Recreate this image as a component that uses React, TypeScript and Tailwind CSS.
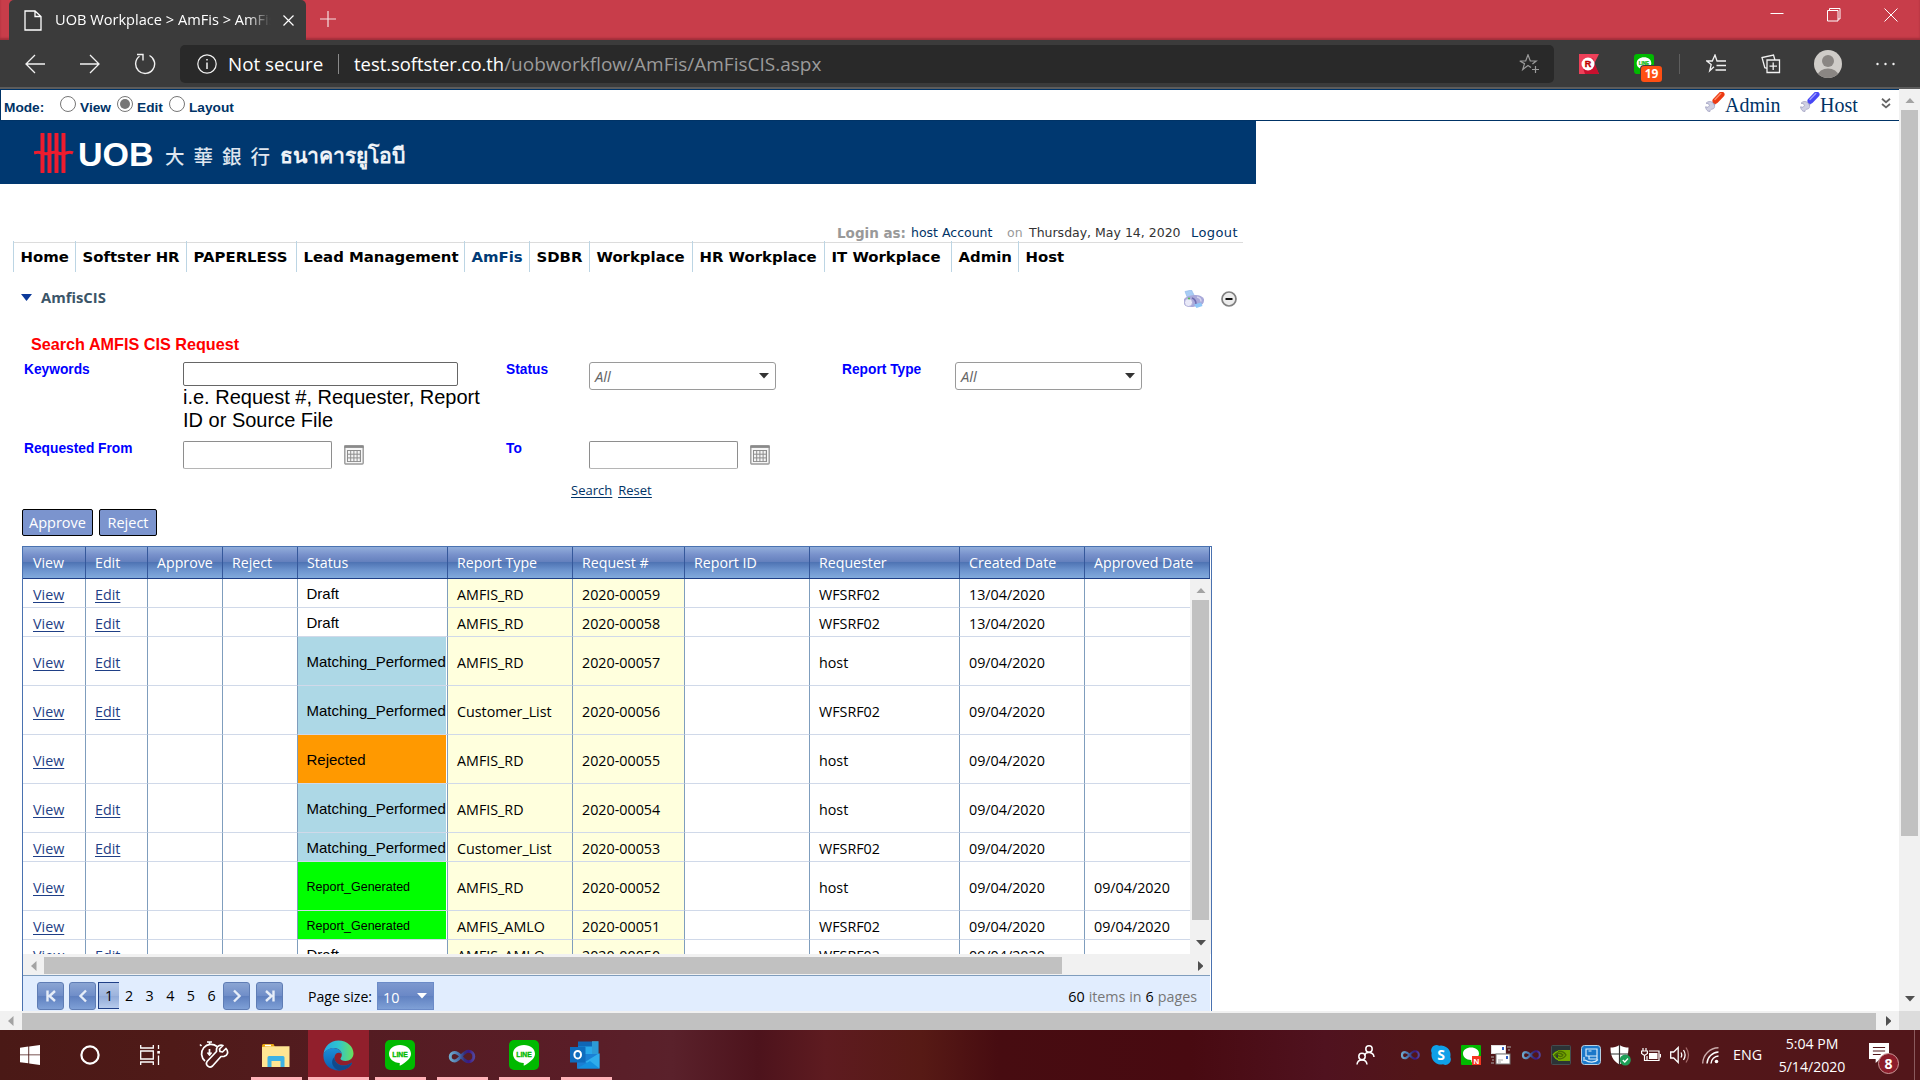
import React from "react";

const sans = "font-['Open_Sans',sans-serif]";
const arial = "font-['Liberation_Sans',sans-serif]";

/* ---------- icons ---------- */

function LineLogo({ size, className = "" }: { size: number; className?: string }) {
  return (
    <svg width={size} height={size} viewBox="0 0 30 30" className={`shrink-0 ${className}`}>
      <rect width="30" height="30" rx="5" fill="#00b900" />
      <path d="M15 5c6.400 0 11 3.900 11 8.800 0 2.200-1 4-2.600 5.700C21 22 17.600 24.400 15.300 25.500c-.8.3-.7-.3-.6-1l.1-1.500C8.500 22.800 4 19 4 13.800 4 8.900 8.600 5 15 5z" fill="#fff" />
      <text x="15" y="16.800" fontSize="6.800" fontWeight="bold" textAnchor="middle" fill="#00b900" stroke="#00b900" strokeWidth=".3" fontFamily="Liberation Sans, sans-serif">LINE</text>
    </svg>
  );
}

function Infinity({ w, h, id, className = "" }: { w: number; h: number; id: string; className?: string }) {
  return (
    <svg width={w} height={h} viewBox="0 0 28 15" className={`shrink-0 ${className}`}>
      <defs>
        <linearGradient id={id} x1="0" x2="1" y1="0" y2="0">
          <stop offset="0" stopColor="#6fa9cc" />
          <stop offset=".4" stopColor="#456ba8" />
          <stop offset=".6" stopColor="#34307c" />
          <stop offset=".8" stopColor="#3b1788" />
          <stop offset="1" stopColor="#51459c" />
        </linearGradient>
      </defs>
      <path d="M14 8C11.500 5 9.500 3.500 7 3.500a4.200 4.200 0 0 0 0 8.500c5 0 8-9.800 14-9.800a5.200 5.200 0 0 1 0 10.500c-3 0-5-2.200-7-4.700z" fill="none" stroke={`url(#${id})`} strokeWidth="3" />
    </svg>
  );
}

function Wrench({ color, light }: { color: string; light: string }) {
  return (
    <svg width="20" height="20" viewBox="0 0 20 20" className="shrink-0">
      <path d="M9.500 10.500 6.500 14" stroke="#a9a9c8" strokeWidth="4" />
      <path d="M7.500 10.300C5.500 9 2.500 9.300 1 11.300l2.500.4.900 2L3 15.300l-2.500-.5c.4 2 1 3.400 2.500 4.400l2 .3c0-1.800 1.200-2.200 2.400-2.400C9.300 16.800 10 14.800 9.500 13z" fill="#cfd0e2" stroke="#9a9abc" strokeWidth=".7" />
      <path d="m10.500 8.800 6-6.300" stroke={color} strokeWidth="6" strokeLinecap="round" />
      <path d="m10 7.500 5.800-6" stroke={light} strokeWidth="1.500" strokeLinecap="round" />
    </svg>
  );
}

function Calendar({ className = "" }: { className?: string }) {
  return (
    <svg width="20" height="20" viewBox="0 0 20 20" className={`shrink-0 ${className}`}>
      <rect x=".8" y="1" width="18.400" height="18" rx="1" fill="#f6f6f6" stroke="#9a9a9a" strokeWidth="1.400" />
      <rect x=".3" y=".3" width="19.400" height="2.600" fill="#8a8a8a" />
      <rect x="3" y="5" width="14" height="12" fill="#8d8d8d" />
      {[0, 1, 2, 3].map((c) => [0, 1, 2].map((r) => <rect key={`${c}${r}`} x={4 + c * 3.200} y={6 + r * 3.700} width="2.200" height="2.700" fill="#f4f4f4" />))}
    </svg>
  );
}

function Tri({ dir, color, className = "" }: { dir: "up" | "down" | "left" | "right"; color: string; className?: string }) {
  const d = { up: "M0 5.500 5 0l5 5.500z", down: "M0 0h10L5 5.500z", left: "M5.500 0v10L0 5z", right: "M0 0v10l5.500-5z" }[dir];
  const v = dir === "up" || dir === "down";
  return (
    <svg width={v ? 10 : 5.500} height={v ? 5.500 : 10} viewBox={v ? "0 0 10 5.500" : "0 0 5.500 10"} className={`shrink-0 ${className}`}>
      <path d={d} fill={color} />
    </svg>
  );
}

/* ---------- browser chrome ---------- */

function TabStrip() {
  return (
    <div className="flex h-10 bg-[#c83d4a] shadow-[inset_0_-2px_2px_rgba(90,20,30,0.35)]">
      <div className="ml-[9px] flex h-10 w-[297px] items-center rounded-t-[5px] bg-[#3b3b3b] pl-[15px]">
        <svg width="18" height="21" viewBox="0 0 18 21" fill="none" stroke="#fff" strokeWidth="1.300">
          <path d="M1 1h10l6 5.500V20H1zM11 1v5.500h6" />
        </svg>
        <div className={`ml-[13px] w-[218px] overflow-hidden whitespace-nowrap text-[14.6px] text-white [mask-image:linear-gradient(90deg,#000_88%,transparent_99%)] ${sans}`}>
          UOB Workplace &gt; AmFis &gt; AmFis
        </div>
        <svg width="11" height="11" viewBox="0 0 11 11" className="ml-[10px]" stroke="#fff" strokeWidth="1.200">
          <path d="m.5.5 10 10M10.500.5l-10 10" />
        </svg>
      </div>
      <svg width="16" height="16" viewBox="0 0 16 16" className="mt-[11px] ml-[14px]" stroke="#f6dfe1" strokeWidth="1.200">
        <path d="M8 0v16M0 8h16" />
      </svg>
      <div className="mt-2 mr-[22px] ml-auto flex gap-[43px]">
        <svg width="14" height="14" viewBox="0 0 14 14" stroke="#fff"><path d="M.5 5.500h13" /></svg>
        <svg width="14" height="14" viewBox="0 0 14 14" stroke="#fff" fill="none"><path d="M.5 2.500h10.500V13H.5zM2.500 2.500v-2H13V11h-2" /></svg>
        <svg width="14" height="14" viewBox="0 0 14 14" stroke="#fff"><path d="m.5.5 13 13M13.500.5l-13 13" /></svg>
      </div>
    </div>
  );
}

function Toolbar() {
  return (
    <div className={`flex h-[49px] items-center border-b-2 border-[#5c5c5c] bg-[#3b3b3b] ${sans}`}>
      <svg width="20" height="20" viewBox="0 0 20 20" className="ml-[25px]" fill="none" stroke="#f2f2f2" strokeWidth="1.300"><path d="M20 10H1M10 1 1 10l9 9" /></svg>
      <svg width="20" height="20" viewBox="0 0 20 20" className="ml-[35px]" fill="none" stroke="#f2f2f2" strokeWidth="1.300"><path d="M0 10h19M10 1l9 9-9 9" /></svg>
      <svg width="22" height="22" viewBox="0 0 22 22" className="ml-[34px]" fill="none" stroke="#f2f2f2" strokeWidth="1.400"><path d="M15.500 2.500A9.500 9.500 0 1 1 5.500 3.300M3 1.500h6v6" /></svg>
      <div className="ml-[24px] flex h-[38px] w-[1374px] items-center rounded-[5px] bg-[#292929]">
        <svg width="20" height="20" viewBox="0 0 20 20" className="ml-[17px]" fill="none" stroke="#f2f2f2" strokeWidth="1.200"><circle cx="10" cy="10" r="9.200" /><path d="M10 8.500V15M10 5v1.600" strokeWidth="1.500" /></svg>
        <span className="ml-[11px] w-[96px] pt-px text-[18.8px] whitespace-nowrap text-white">Not secure</span>
        <span className="ml-[14px] h-5 w-px bg-[#8a8a8a]" />
        <span className="ml-[15px] pt-px text-[18.4px] whitespace-nowrap text-white">test.softster.co.th</span>
        <span className="pt-px text-[19px] whitespace-nowrap text-[#9b9b9b]">/uobworkflow/AmFis/AmFisCIS.aspx</span>
        <svg width="21" height="20" viewBox="0 0 21 20" className="mr-[14px] ml-auto" fill="none" stroke="#9b9b9b" strokeWidth="1.200">
          <path d="m12 13.500-3-1.900-5.300 4 1.800-6L.8 7h5.900L9 .8 11.300 7h5.900l-3.800 3" /><path d="M16.500 12v7M13 15.500h7" />
        </svg>
      </div>
      <svg width="20" height="20" viewBox="0 0 20 20" className="ml-[25px]">
        <path d="M0 0h20l-5 10 5 10H0z" fill="#ee4059" /><path d="m4 14 10-10 2 6 4 10H6z" fill="#c8102e" />
        <circle cx="9" cy="10" r="6.500" fill="#fff" />
        <text x="9" y="13.200" fontSize="9" fontWeight="bold" textAnchor="middle" fill="#bf0000" stroke="#bf0000" strokeWidth=".4" fontFamily="Liberation Sans, sans-serif">R</text>
      </svg>
      <div className="relative ml-[35px] h-5 w-5">
        <LineLogo size={20} />
        <span className="absolute top-[12px] left-[7px] flex h-4 w-[21px] items-center justify-center rounded-[3px] bg-[#ff4f13] text-[12px] font-bold text-white shadow-[0_0_0_1px_#3b3b3b]">19</span>
      </div>
      <span className="ml-[25px] h-5 w-px bg-[#5e5e5e]" />
      <svg width="20" height="20" viewBox="0 0 20 20" className="ml-[26px]" fill="none" stroke="#f2f2f2" strokeWidth="1.300">
        <path d="m8 12.800-4.300 4 1.500-6.300L.8 7h5.500L9 1l2 6h9M10.500 11.500H20M9.500 16H20" />
      </svg>
      <svg width="20" height="20" viewBox="0 0 20 20" className="ml-[35px]" fill="none" stroke="#f2f2f2" strokeWidth="1.300">
        <path d="M6 6h12.500v12.500H6zM12.200 8.500V16M8.500 12.200H16M6 14.500l-2.200-.8L1 3.500 12.500 1l1.300 4.500" />
      </svg>
      <svg width="28" height="28" viewBox="0 0 28 28" className="ml-[33px]">
        <defs><clipPath id="av"><circle cx="14" cy="14" r="14" /></clipPath></defs>
        <g clipPath="url(#av)"><rect width="28" height="28" fill="#cfccc8" /><circle cx="14" cy="11" r="6" fill="#8a8683" /><ellipse cx="14" cy="25" rx="10" ry="6.500" fill="#8a8683" /></g>
      </svg>
      <svg width="19" height="4" viewBox="0 0 19 4" className="ml-[34px]" fill="#f2f2f2"><circle cx="1.500" cy="2" r="1.200" /><circle cx="9.500" cy="2" r="1.200" /><circle cx="17.500" cy="2" r="1.200" /></svg>
    </div>
  );
}

/* ---------- page ---------- */

function Radio({ on = false, className = "" }: { on?: boolean; className?: string }) {
  return (
    <span className={`flex h-4 w-4 shrink-0 items-center justify-center rounded-full border border-[#767676] bg-white ${className}`}>
      {on && <span className="h-[10px] w-[10px] rounded-full bg-[#767676]" />}
    </span>
  );
}

function ModeBar() {
  return (
    <div className={`flex h-8 items-start border-y border-l border-[#003366] text-[13.7px] leading-4 font-bold text-[#003366] ${arial}`}>
      <span className="mt-[10px] ml-[3px] w-[56px]">Mode:</span>
      <Radio className="mt-[6px]" /><span className="mt-[10px] ml-1 w-[37px]">View</span>
      <Radio on className="mt-[6px]" /><span className="mt-[10px] ml-1 w-8">Edit</span>
      <Radio className="mt-[6px]" /><span className="mt-[10px] ml-1">Layout</span>
      <div className="ml-auto flex font-['Liberation_Serif',serif] text-[20px] leading-[22px] font-normal">
        <span className="mt-[2px] flex"><Wrench color="#ec3a12" light="#ff8a66" /></span><span className="mt-[4px] w-[75px]">Admin</span>
        <span className="mt-[2px] flex"><Wrench color="#4747f5" light="#9a9aff" /></span><span className="mt-[4px] w-[61px]">Host</span>
        <svg width="10" height="11" viewBox="0 0 10 11" className="mt-[8px] mr-[8px]" fill="none" stroke="#666" strokeWidth="1.800"><path d="m1 .8 4 3.400L9 .8M1 6l4 3.400L9 6" /></svg>
      </div>
    </div>
  );
}

function Banner() {
  return (
    <div className="flex h-[63px] w-[1256px] items-start bg-[#003870] whitespace-nowrap text-white">
      <svg width="40" height="40" viewBox="0 0 40 40" className="mt-[12px] ml-[34px] shrink-0" stroke="#ee1c2e" fill="none">
        <path d="M8.500 1v38M15.500 1v38M22.500 1v38M29.500 1v38" strokeWidth="4" strokeLinecap="round" />
        <path d="M0 20q4-1.500 8 0t8 0 8 0 8 0 7 0" strokeWidth="3.200" />
      </svg>
      <span className={`mt-[15px] ml-[4px] w-[87px] text-[34px] leading-[36px] font-bold ${arial}`}>UOB</span>
      <span className="mt-[20px] w-[115px] font-['Noto_Sans_CJK_TC',sans-serif] text-[19.500px] leading-[30px] font-medium tracking-[9px] text-[#dfe6ef]">大華銀行</span>
      <span className={`mt-[20px] text-[21.2px] leading-[30px] font-bold text-[#eef2f7] ${arial}`}>ธนาคารยูโอบี</span>
    </div>
  );
}

const nav: [string, string][] = [
  ["Home", "w-[62px]"], ["Softster HR", "w-[111px]"], ["PAPERLESS", "w-[110px]"], ["Lead Management", "w-[168px]"],
  ["AmFis", "w-[65px]"], ["SDBR", "w-[60px]"], ["Workplace", "w-[103px]"], ["HR Workplace", "w-[132px]"],
  ["IT Workplace", "w-[127px]"], ["Admin", "w-[67px]"], ["Host", "w-[60px]"],
];

function Header() {
  return (
    <>
      <div className="flex h-[57px] w-[1239px] items-end justify-end font-['DejaVu_Sans',sans-serif] text-[12.5px] leading-4 whitespace-nowrap">
        <span className="w-[74px] text-[13.500px] font-bold text-[#999]">Login as:</span>
        <span className="w-[96px] text-[#003366]">host Account</span>
        <span className="w-[22px] text-[#999]">on</span>
        <span className="w-[162px] text-[#333]">Thursday, May 14, 2020</span>
        <span className="w-[48px] text-[13px] tracking-[0.400px] text-[#003366]">Logout</span>
      </div>
      <nav className="ml-[13px] flex h-[31px] w-[1230px] bg-[linear-gradient(#dcdcdc,#dcdcdc)] bg-[length:100%_1px] bg-[position:0_1px] bg-no-repeat font-['DejaVu_Sans',sans-serif] text-[14.9px] font-bold text-black">
        {nav.map(([t, w]) => (
          <a key={t} className={`${w} shrink-0 border-l border-[#bcd5e4] pt-[6px] pl-[6.500px] leading-[20px] whitespace-nowrap ${t === "AmFis" ? "text-[#003a75]" : ""}`}>{t}</a>
        ))}
      </nav>
    </>
  );
}

function ModuleTitle() {
  return (
    <div className={`flex h-[62px] w-[1237px] pl-[21px] text-[14.800px] font-bold text-[#3b5568] ${sans}`}>
      <svg width="11" height="7" viewBox="0 0 11 7" className="mt-[22px]"><path d="M0 0h11L5.500 7z" fill="#0c3a9a" /></svg>
      <span className="mt-[14px] ml-[9px] leading-[22px]">AmfisCIS</span>
      <svg width="20" height="18" viewBox="0 0 20 18" className="mt-[18px] ml-auto">
        <path d="M1 1.500 7.500 0l3 6-7 2z" fill="#a9cdf5" stroke="#8bb4e8" strokeWidth=".6" />
        <path d="M0 9c2-2.500 6-3.500 10-4 5-.5 8 1 10 4 .3 3-1 5-3 6L9 17c-4 .5-8-1-9-3z" fill="#a9a9da" />
        <ellipse cx="4.500" cy="12.500" rx="4" ry="4" fill="#e9e9f8" stroke="#9a9acb" strokeWidth=".6" />
        <path d="M8 8c3 1 4 3 4 6" stroke="#6d6db0" strokeWidth="1.500" fill="none" />
        <path d="M13 7c2.500.5 4 2 4 4.500" stroke="#d5d5ee" strokeWidth="1.500" fill="none" />
        <path d="m10 14.500 7-2 1.500 3.500-6 2z" fill="#8fc6f7" /><circle cx="5" cy="8.500" r="1" fill="#4dbb4d" />
      </svg>
      <svg width="16" height="16" viewBox="0 0 16 16" className="mt-[19px] ml-[17px]"><circle cx="8" cy="8" r="7" fill="#ececec" stroke="#808080" strokeWidth="1.700" /><path d="M4.500 8h7" stroke="#111" strokeWidth="2" /></svg>
    </div>
  );
}

function Select() {
  return (
    <div className={`flex h-[28px] w-[187px] items-center rounded-[3px] border border-[#9a9a9a] bg-white pr-[6px] pl-[5px] text-[14.8px] text-[#666] italic ${sans}`}>
      <span>All</span>
      <Tri dir="down" color="#333" className="ml-auto" />
    </div>
  );
}

function SearchForm() {
  const label = `text-[13.75px] leading-4 font-bold text-[#0000ff] ${arial}`;
  const date = "h-[28px] w-[149px] rounded-[2px] border border-[#8e8e8e] border-b-[#b5b5b5] bg-white";
  return (
    <>
      <h2 className={`ml-[31px] h-[20px] text-[16.2px] leading-[20px] font-bold text-[#ff0000] ${arial}`}>Search AMFIS CIS Request</h2>
      <div className="mt-[8px] ml-[24px] grid grid-cols-[159px_323px_83px_253px_113px_187px] grid-rows-[79px_28px] items-start">
        <span className={label}>Keywords</span>
        <div>
          <div className="h-[24px] w-[275px] rounded-[2px] border border-[#666] bg-white" />
          <p className={`w-[310px] text-[20px] leading-[23px] text-black ${arial}`}>i.e. Request #, Requester, Report ID or Source File</p>
        </div>
        <span className={label}>Status</span>
        <Select />
        <span className={label}>Report Type</span>
        <Select />
        <span className={label}>Requested From</span>
        <div className="flex"><div className={date} /><Calendar className="mt-[4px] ml-[12px]" /></div>
        <span className={label}>To</span>
        <div className="flex"><div className={date} /><Calendar className="mt-[4px] ml-[12px]" /></div>
      </div>
      <div className={`mt-[12px] ml-[571px] flex h-[19px] gap-[6px] text-[13px] leading-[18px] text-[#003366] underline underline-offset-2 ${sans}`}>
        <a>Search</a><a>Reset</a>
      </div>
    </>
  );
}

const cols = "grid grid-cols-[63px_62px_75px_75px_150px_125px_112px_125px_150px_125px_125px]";
const heads = ["View", "Edit", "Approve", "Reject", "Status", "Report Type", "Request #", "Report ID", "Requester", "Created Date", "Approved Date"];

type Row = { tall: boolean; edit: boolean; status: string; type: string; no: string; by: string; created: string; approved: string };
const rows: Row[] = [
  { tall: false, edit: true, status: "Draft", type: "AMFIS_RD", no: "2020-00059", by: "WFSRF02", created: "13/04/2020", approved: "" },
  { tall: false, edit: true, status: "Draft", type: "AMFIS_RD", no: "2020-00058", by: "WFSRF02", created: "13/04/2020", approved: "" },
  { tall: true, edit: true, status: "Matching_Performed", type: "AMFIS_RD", no: "2020-00057", by: "host", created: "09/04/2020", approved: "" },
  { tall: true, edit: true, status: "Matching_Performed", type: "Customer_List", no: "2020-00056", by: "WFSRF02", created: "09/04/2020", approved: "" },
  { tall: true, edit: false, status: "Rejected", type: "AMFIS_RD", no: "2020-00055", by: "host", created: "09/04/2020", approved: "" },
  { tall: true, edit: true, status: "Matching_Performed", type: "AMFIS_RD", no: "2020-00054", by: "host", created: "09/04/2020", approved: "" },
  { tall: false, edit: true, status: "Matching_Performed", type: "Customer_List", no: "2020-00053", by: "WFSRF02", created: "09/04/2020", approved: "" },
  { tall: true, edit: false, status: "Report_Generated", type: "AMFIS_RD", no: "2020-00052", by: "host", created: "09/04/2020", approved: "09/04/2020" },
  { tall: false, edit: false, status: "Report_Generated", type: "AMFIS_AMLO", no: "2020-00051", by: "WFSRF02", created: "09/04/2020", approved: "09/04/2020" },
  { tall: false, edit: true, status: "Draft", type: "AMFIS_AMLO", no: "2020-00050", by: "WFSRF02", created: "09/04/2020", approved: "" },
];

const statusStyle: Record<string, string> = {
  Draft: "text-[15px]",
  Matching_Performed: "bg-[#add8e6] text-[15px]",
  Rejected: "bg-[#ff9900] text-[15px]",
  Report_Generated: "bg-[#00ff00] text-[12.500px]",
};

function GridRow({ r }: { r: Row }) {
  const cell = "flex items-center border-r border-b border-r-[#7f9dbd] border-b-[#d0d9e9] pl-[9px] pt-[3px] whitespace-nowrap";
  const link = "text-[#1f3f86] underline underline-offset-2";
  return (
    <div className={`${cols} shrink-0 ${r.tall ? "h-[49px]" : "h-[29px]"}`}>
      <div className={`${cell} pl-[10px]`}><a className={link}>View</a></div>
      <div className={cell}>{r.edit && <a className={link}>Edit</a>}</div>
      <div className={cell} />
      <div className={cell} />
      <div className="flex border-r border-b border-r-[#7f9dbd] border-b-[#d0d9e9]">
        <div className={`mr-px flex w-full items-center pt-[2px] pl-[8.500px] whitespace-nowrap ${arial} ${statusStyle[r.status]}`}>{r.status}</div>
      </div>
      <div className={`${cell} bg-[#ffffdd]`}>{r.type}</div>
      <div className={`${cell} bg-[#ffffdd]`}>{r.no}</div>
      <div className={cell} />
      <div className={cell}>{r.by}</div>
      <div className={cell}>{r.created}</div>
      <div className={cell}>{r.approved}</div>
    </div>
  );
}

function PagerButton({ d, className = "" }: { d: string; className?: string }) {
  return (
    <span className={`flex h-7 w-[27px] shrink-0 items-center justify-center rounded-[3px] border border-[#5f7db5] bg-[linear-gradient(#8ba5d3,#6f8dc8_50%,#5f80bf_51%,#7fa0d6)] ${className}`}>
      <svg width="14" height="14" viewBox="0 0 14 14" fill="none" stroke="#e6edf8" strokeWidth="2.400"><path d={d} /></svg>
    </span>
  );
}

function Grid() {
  return (
    <div className={`mt-[10px] ml-[22px] flex h-[465px] w-[1190px] flex-col border-x border-t border-[#4a72b0] text-[14.3px] text-black ${sans}`}>
      <div className={`${cols} h-8 w-[1187px] shrink-0 border-b border-[#1f3f86] bg-[linear-gradient(#92aedb_0%,#7891cb_25%,#6480bd_48%,#4f74b4_50%,#6d94ce_75%,#82aadc_100%)] text-[14.2px] text-white`}>
        {heads.map((h, i) => (
          <div key={h} className={`flex items-center border-r border-[#35589b] pt-px whitespace-nowrap ${i === 0 ? "pl-[10px]" : "pl-[9px]"}`}>{h}</div>
        ))}
      </div>
      <div className="flex h-[375px] w-[1188px] shrink-0">
        <div className="flex w-[1167px] flex-col overflow-hidden">
          {rows.map((r) => <GridRow key={r.no} r={r} />)}
        </div>
        <div className="flex w-[21px] flex-col items-center bg-[#f1f1f1]">
          <Tri dir="up" color="#a3a3a3" className="mt-[8.500px]" />
          <div className="mt-[7px] h-[320px] w-[17px] shrink-0 bg-[#c1c1c1]" />
          <Tri dir="down" color="#505050" className="mt-[20px]" />
        </div>
      </div>
      <div className="flex h-[21px] w-[1187px] shrink-0 items-center bg-[#f1f1f1] pt-[2px]">
        <Tri dir="left" color="#a3a3a3" className="ml-[8px]" />
        <div className="ml-[7.500px] h-[17px] w-[1018px] bg-[#c1c1c1]" />
        <Tri dir="right" color="#505050" className="mr-[7px] ml-auto" />
      </div>
      <div className="flex h-[36px] w-[1187px] shrink-0 items-start border-t border-[#7f9dbd] bg-[#e1edfe] pt-[6px]">
        <PagerButton className="ml-[14px]" d="M3.500 1.500v11M11 2 5.500 7l5.500 5" />
        <PagerButton className="ml-[5px]" d="M10 1.500 4.500 7l5.500 5.500" />
        <span className="ml-[2px] flex h-[27px] w-[21px] items-center justify-center border border-r-0 border-[#1f3f86] bg-[linear-gradient(#b6c9e8,#9db4dd_50%,#8fa9d7_51%,#b7cbec)]">1</span>
        <span className="ml-[6px] flex h-[27px] w-[98px] items-center">
          {["2", "3", "4", "5", "6"].map((n) => <a key={n} className="w-[20.600px] shrink-0">{n}</a>)}
        </span>
        <PagerButton d="M4 1.500 9.500 7 4 12.500" />
        <PagerButton className="ml-[6px]" d="M10.500 1.500v11M3 2l5.500 5L3 12" />
        <span className="ml-[25px] flex h-7 w-[69px] items-center pt-px text-[14.100px]">Page size:</span>
        <span className="flex h-7 w-[57px] items-center border border-[#6b8bc8] bg-[linear-gradient(#7d98cf,#6a88c6_50%,#6081c1_51%,#7fa0d6)] pr-[6px] pl-[5px] text-white">
          <span className="pt-[3px]">10</span><Tri dir="down" color="#fff" className="ml-auto" />
        </span>
        <span className="mr-[13px] ml-auto flex h-7 items-center gap-[4px] pt-px text-[#777]"><b className="font-normal text-black">60</b>items in<b className="font-normal text-black">6</b>pages</span>
      </div>
    </div>
  );
}

function Page() {
  const btn = "flex h-[27px] items-center justify-center rounded-[2px] border border-black bg-[#7b94ce]";
  return (
    <div className="flex h-[941px] bg-white">
      <div className="flex w-[1899px] flex-col">
        <div className="h-[922px] overflow-hidden">
          <ModeBar />
          <Banner />
          <Header />
          <ModuleTitle />
          <SearchForm />
          <div className={`mt-[9px] ml-[22px] flex gap-[6px] text-[14.5px] text-white ${sans}`}>
            <span className={`${btn} w-[71px]`}>Approve</span>
            <span className={`${btn} w-[58px]`}>Reject</span>
          </div>
          <Grid />
        </div>
        <div className="flex h-[19px] items-center bg-[#f1f1f1]">
          <Tri dir="left" color="#a3a3a3" className="ml-[8px]" />
          <div className="mt-[2px] ml-[8px] h-[17px] w-[1854px] bg-[#c1c1c1]" />
          <Tri dir="right" color="#505050" className="ml-[10px]" />
        </div>
      </div>
      <div className="flex w-[21px] flex-col items-center bg-[#f1f1f1]">
        <Tri dir="up" color="#a3a3a3" className="mt-[8.500px]" />
        <div className="mt-[7px] h-[726px] w-[17px] shrink-0 bg-[#c1c1c1]" />
        <Tri dir="down" color="#505050" className="mt-[160px]" />
        <div className="mt-auto h-[19px] w-[21px] bg-[#dcdcdc]" />
      </div>
    </div>
  );
}

/* ---------- taskbar ---------- */

function TaskItem({ children, active = false, className = "" }: { children: React.ReactNode; active?: boolean; className?: string }) {
  return (
    <div className={`flex h-[50px] shrink-0 flex-col ${active ? "bg-[#911f2c]" : ""} ${className}`}>
      <div className="flex h-[47px] items-center justify-center pt-[3px]">{children}</div>
      <div className="h-[3px] bg-[#ffb3b9]" />
    </div>
  );
}

function Taskbar() {
  return (
    <div className={`flex h-[50px] items-center bg-[linear-gradient(90deg,#4a1916_0%,#4f1a18_9%,#541c22_19%,#5a1d27_30%,#5a212b_35%,#4d131c_39.500%,#5e1b20_43%,#571a15_48%,#470c11_52%,#480a11_62%,#50121f_69%,#521618_74%,#52161a_100%)] text-white ${sans}`}>
      <svg width="20" height="20" viewBox="0 0 20 20" className="ml-[20px]" fill="#fff"><path d="M0 2.800 8.300 1.600v7.800H0zM9.200 1.500 20 0v9.400H9.200zM0 10.300h8.300v8L0 17.200zM9.200 10.300H20V20L9.200 18.400z" /></svg>
      <svg width="20" height="20" viewBox="0 0 20 20" className="ml-[40px]" fill="none" stroke="#fff" strokeWidth="2.200"><circle cx="10" cy="10" r="8.600" /></svg>
      <svg width="21" height="20" viewBox="0 0 21 20" className="ml-[40px]" fill="none" stroke="#fff" strokeWidth="1.300"><path d="M.7 0v3h12.600V0M.7 20v-3h12.600v3M.7 6h12.600v8H.7zM18.500 0v4M18.500 10.500V20" /><path d="M17.300 6h2.600v2.600h-2.600z" fill="#fff" stroke="none" /></svg>
      <svg width="30" height="28" viewBox="0 0 30 28" className="ml-[38px]" fill="none" stroke="#fff" strokeWidth="1.700" strokeLinejoin="round">
        <path d="M18 5.500A9.300 9.300 0 1 0 6 20M8 1h5M10.500 1v2.500M10.500 8v5.500M2.500 5 1 3.500" /><path d="m8.500 11.500 2 2.500 2-2.500" />
        <path d="M27 7.500 23.500 11l-2.500-.5-.5-2.500L24 4.500c-3-1-6 .5-6.500 3.500v2.500l-9 9.500c-3 3.500 1.500 8 5 5l8.500-9.500 3-.2C28.500 14.500 30 11 27 7.500z" />
      </svg>
      <TaskItem className="ml-[22px] w-[51px]">
        <svg width="28" height="23" viewBox="0 0 28 23" className="mr-px"><path d="M0 1.500Q0 0 1.500 0h10L13 3H0z" fill="#e8a613" /><path d="M3 .8h6v1.500H3z" fill="#fff" /><path d="M0 3 13 2.200h14.500V23H0z" fill="#ffe593" /><path d="M5.500 23V13.500q0-1.500 1.500-1.500h14q1.500 0 1.500 1.500V23h-4v-6h-9v6z" fill="#3db2e5" /></svg>
      </TaskItem>
      <TaskItem active className="ml-[6px] w-[61px]">
        <svg width="31" height="31" viewBox="0 0 31 31" className="mr-px">
          <defs>
            <linearGradient id="e1" x1="0" x2="1"><stop offset="0" stopColor="#26a6e2" /><stop offset=".5" stopColor="#2fc4cf" /><stop offset="1" stopColor="#6be05a" /></linearGradient>
            <linearGradient id="e2" x1="0" x2="0" y1="0" y2="1"><stop offset="0" stopColor="#1a8fd8" /><stop offset="1" stopColor="#0d5cae" /></linearGradient>
          </defs>
          <path d="M.5 14C1.500 6 7.500.5 15.500.5c8.500 0 15 6 15 13 0 4.500-3.500 7.500-8 7.500-3 0-5-1-5-2.200 0-1 1.300-1.600 1.300-4C18.800 10 14 7.500 10 8S2 11 .5 14z" fill="url(#e1)" />
          <path d="M.5 14C2.500 10 6.500 8 10.500 8c5 0 8 3 8.300 6.500-1.500-3-6.800-2.500-7.300 2.500-.5 5.500 5 9 10 8.500 3-.2 5-1.500 6.500-2.500 1-.5 1.200 0 .8.800-2.300 4-7 6.700-12.800 6.700C6 30.500-.5 23 .5 14z" fill="url(#e2)" />
          <path d="M11.500 17c-.6 5.500 5 9 10 8.500 3-.2 5-1.500 6.500-2.500 1-.5 1.200 0 .8.800-2.300 4-7 6.700-12.800 6.700-6-2-9.500-9-4.500-13.500z" fill="#114a8b" />
        </svg>
      </TaskItem>
      <TaskItem className="ml-[6px] w-[51px]"><LineLogo size={30} className="mr-[2px]" /></TaskItem>
      <TaskItem className="ml-[11px] w-[51px]"><Infinity w={29} h={15} id="i1" className="mt-[3px] mr-[3px]" /></TaskItem>
      <TaskItem className="ml-[11px] w-[51px]"><LineLogo size={30} className="mr-[2px]" /></TaskItem>
      <TaskItem className="ml-[11px] w-[51px]">
        <svg width="30" height="28" viewBox="0 0 30 28" className="-ml-[3px]">
          <path d="M8 .5h20.500V14H8z" fill="#1066b5" /><path d="M8 5.500h7V13H8z" fill="#1490df" /><path d="M15 5.500h7V13h-7z" fill="#28a8ea" /><path d="M22 0h6.500v14H22z" fill="#50d9ff" opacity=".45" />
          <path d="M7 13h22.500v14.500H7z" fill="#1a7fd4" /><path d="M29.500 12 15 21l14.500 6.500z" fill="#35b8f1" opacity=".8" /><path d="M7 27.500 20 20l9.500 7.500z" fill="#1490df" />
          <path d="M0 6h15.500v15.500H0z" fill="#0f6cbd" /><ellipse cx="7.700" cy="13.700" rx="3.300" ry="3.800" fill="none" stroke="#fff" strokeWidth="2" />
        </svg>
      </TaskItem>
      <div className="ml-auto flex items-center">
        <svg width="19" height="20" viewBox="0 0 19 20" className="mr-[25px]" fill="none" stroke="#fff" strokeWidth="1.500"><circle cx="13" cy="4" r="3.200" /><path d="M8.500 10.500C9.500 6 17.500 6.500 18 12" /><circle cx="6" cy="11.500" r="3.200" /><path d="M1 19.500c.5-6 9.500-6 10 0" /></svg>
        <Infinity w={20} h={12} id="i2" className="mr-[11px]" />
        <svg width="20" height="20" viewBox="0 0 20 20" className="mr-[10px]"><path d="M5.500 0a5.500 5.500 0 0 1 2.700.7A9.500 9.500 0 0 1 19.300 12 5.500 5.500 0 0 1 12 19.300 9.500 9.500 0 0 1 .7 8 5.500 5.500 0 0 1 5.500 0z" fill="#0fa0e8" /><text x="10" y="15" fontSize="14" fontWeight="bold" textAnchor="middle" fill="#fff" fontFamily="Open Sans, sans-serif">S</text></svg>
        <svg width="20" height="20" viewBox="0 0 20 20" className="mr-[10px]"><rect width="20" height="20" rx="1" fill="#00b900" /><path d="M10 2.500c4.500 0 8 2.500 8 6s-4 6.500-7.500 9l-.3-2.500C5 15 2 12 2 8.500s3.500-6 8-6z" fill="#fff" /><rect x="11" y="11" width="9" height="9" fill="#f5341f" /><text x="15.500" y="18.500" fontSize="8" fontWeight="bold" textAnchor="middle" fill="#fff" fontFamily="Liberation Sans, sans-serif">N</text></svg>
        <svg width="20" height="20" viewBox="0 0 20 20" className="mr-[10px]"><rect x=".5" y=".5" width="14" height="8" fill="#fff" stroke="#ddd" /><path d="M11 2h2v3h-2z" fill="#2f5ec4" /><path d="M16 2h4M17 5h2M0 12h3M1 15h2M0 18h3" stroke="#aaa" /><rect x="5" y="9" width="14" height="10" fill="#fff" stroke="#777" /><path d="M15 11h2v3h-2z" fill="#2f5ec4" /><path d="M7 15h5M7 17h3" stroke="#aaa" /></svg>
        <Infinity w={20} h={12} id="i3" className="mr-[10px]" />
        <svg width="20" height="20" viewBox="0 0 20 20" className="mr-[10px]"><rect x=".5" y=".5" width="19" height="19" rx="1" fill="#2c3336" stroke="#454d50" /><path d="M7 5h12v11H7z" fill="#76a800" /><path d="M2 10c3-5 10-5 13 0-3 5-9 5-11 1 1-3 5-4 8-1-1 2-4 2-5 0" fill="none" stroke="#4b6d00" strokeWidth="1.400" /><path d="M2 10c2-2.500 3.500-3.500 5-3.700M2.500 10.500C4 13 5 14 7 14.500" fill="none" stroke="#76b900" strokeWidth="1.300" /></svg>
        <svg width="20" height="20" viewBox="0 0 20 20" className="mr-[9px]"><rect x=".5" y=".5" width="19" height="19" rx="3" fill="#1b78c9" stroke="#b5cfe2" /><path d="M5 4h11v7H5zM7.500 6h3M8 11v3h8v-3M4 15c4 3 10 3 13-.5M3 12v4" fill="none" stroke="#d7ecfb" strokeWidth="1.200" /></svg>
        <svg width="21" height="21" viewBox="0 0 21 21" className="mr-[10px]"><path d="M9.500 0c3 2 6 2.600 9 2.600 0 8-2 13-9 17-7-4-9-9-9-17 3 0 6-.6 9-2.600z" fill="#fff" /><path d="M9.500 0v20M0 9h19" stroke="#333" strokeWidth="1.200" /><circle cx="15.300" cy="15" r="5.500" fill="#1e9e57" /><path d="m12.800 15 2 2 3.200-3.500" stroke="#fff" strokeWidth="1.300" fill="none" /></svg>
        <svg width="20" height="14" viewBox="0 0 20 14" className="mr-[9px]" fill="none" stroke="#fff" strokeWidth="1.200"><path d="M2 0v3M5 0v3M.6 3h5.800v2.500L3.500 7.500.6 5.500zM3.500 7v5.500H6M8 3h10v9.500H6V8M19.500 6v3.500" /><path d="M8 5h8.500v6H8z" fill="#fff" stroke="none" /></svg>
        <svg width="20" height="18" viewBox="0 0 20 18" className="mr-[12px]" fill="none" stroke="#fff" strokeWidth="1.300"><path d="M.7 6v6h3l4.500 4.500V1.500L3.700 6zM11 6.500q1.500 2.500 0 5M13.500 4q3.200 5 0 10" /><path d="M16 1.500q5 7.500 0 15" stroke="#a56a6a" /></svg>
        <svg width="17" height="17" viewBox="0 0 17 17" className="mr-[14px]" fill="none" stroke="#c9a9a9" strokeWidth="1.400"><path d="M.7 16.500A16 16 0 0 1 16.500.7" /><path d="M5 16.500A12 12 0 0 1 16.500 5M9 16.500A8 8 0 0 1 16.500 9" stroke="#fff" /><circle cx="14.500" cy="14.500" r="1.800" fill="#fff" stroke="none" /></svg>
        <span className="mr-[16px] w-[29px] text-[14.3px]">ENG</span>
        <span className="w-[68px] text-center text-[14.1px] leading-[23px]">5:04 PM<br />5/14/2020</span>
        <div className="relative ml-[23px] h-[32px] w-[30px]">
          <svg width="20" height="20" viewBox="0 0 18 20" preserveAspectRatio="none" className="mt-[4px]"><path d="M0 0h18v16h-8l-4 4v-4H0z" fill="#fff" /><path d="M3.500 4.500h11M3.500 8h11M3.500 11.500h7" stroke="#52161a" strokeWidth="1.200" /></svg>
          <span className="absolute top-[14px] left-[9px] flex h-[21px] w-[21px] items-center justify-center rounded-full border border-[#c99] bg-[#8c1d2b] text-[14px] font-bold">8</span>
        </div>
        <span className="mr-[5px] ml-[15px] h-[50px] w-px bg-[#8a5a5d]" />
      </div>
    </div>
  );
}

export default function App() {
  return (
    <div className="flex h-[1080px] w-[1920px] flex-col overflow-hidden bg-white">
      <TabStrip />
      <Toolbar />
      <Page />
      <Taskbar />
    </div>
  );
}
